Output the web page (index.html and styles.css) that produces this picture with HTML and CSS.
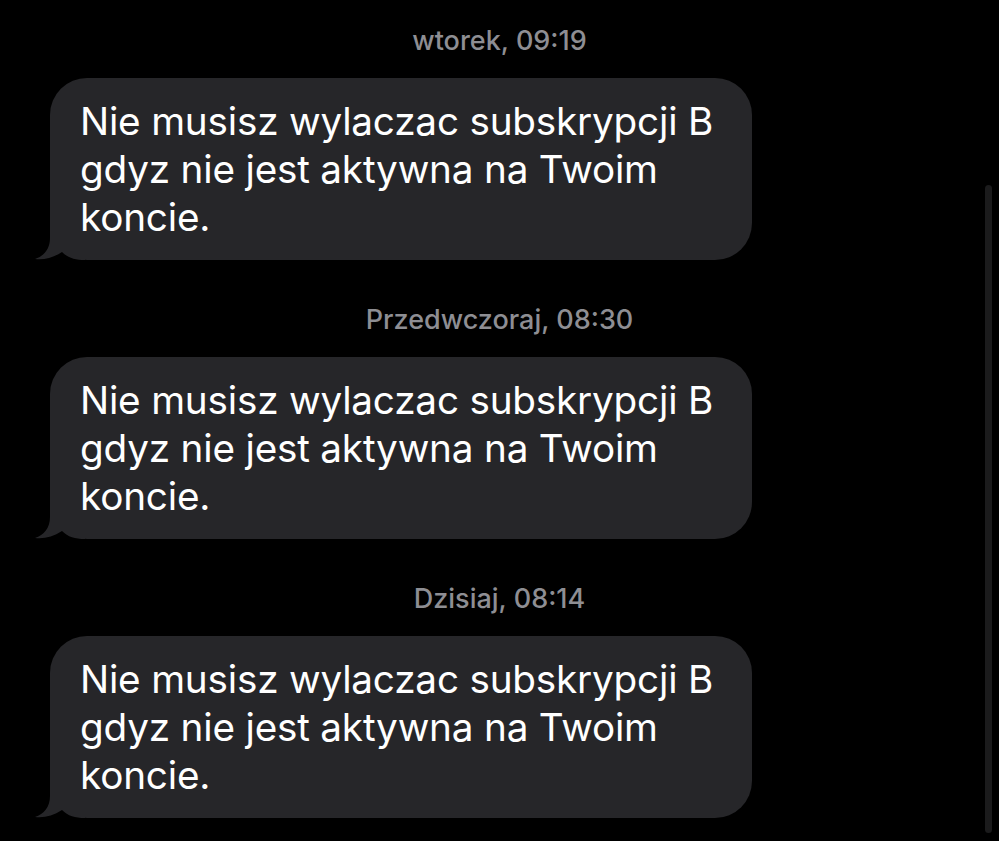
FILE: index.html
```html
<!DOCTYPE html>
<html lang="pl">
<head>
<meta charset="utf-8">
<title>Wiadomości</title>
<link rel="stylesheet" href="styles.css">
</head>
<body>
<main class="thread">
  <div class="stamp">wtorek, 09:19</div>
  <div class="bubble">
    <svg class="tail" viewBox="0 0 50 50" aria-hidden="true"><path d="M15,0 L15,28 C15,39 9,46 0,49 C9,50 18,48 27,42 C33,48 40,50 50,50 L50,0 Z"/></svg>
    <p class="msg">Nie musisz wylaczac subskrypcji B gdyz nie jest aktywna na Twoim koncie.</p>
  </div>
  <div class="stamp">Przedwczoraj, 08:30</div>
  <div class="bubble">
    <svg class="tail" viewBox="0 0 50 50" aria-hidden="true"><path d="M15,0 L15,28 C15,39 9,46 0,49 C9,50 18,48 27,42 C33,48 40,50 50,50 L50,0 Z"/></svg>
    <p class="msg">Nie musisz wylaczac subskrypcji B gdyz nie jest aktywna na Twoim koncie.</p>
  </div>
  <div class="stamp">Dzisiaj, 08:14</div>
  <div class="bubble">
    <svg class="tail" viewBox="0 0 50 50" aria-hidden="true"><path d="M15,0 L15,28 C15,39 9,46 0,49 C9,50 18,48 27,42 C33,48 40,50 50,50 L50,0 Z"/></svg>
    <p class="msg">Nie musisz wylaczac subskrypcji B gdyz nie jest aktywna na Twoim koncie.</p>
  </div>
  <div class="scrollbar"></div>
</main>
</body>
</html>
```

FILE: styles.css
```css
html, body {
  margin: 0;
  padding: 0;
  background: #000;
}
body {
  width: 999px;
  height: 841px;
  overflow: hidden;
  font-family: Inter, "Liberation Sans", sans-serif;
}
.thread {
  position: relative;
  height: 841px;
  padding-top: 24px;
  box-sizing: border-box;
  display: flex;
  flex-direction: column;
}
.stamp {
  flex-shrink: 0;
  text-align: center;
  color: #8e8e93;
  font-size: 27px;
  font-weight: 500;
  line-height: 34px;
  height: 34px;
  margin-bottom: 20px;
}
.bubble {
  flex-shrink: 0;
  position: relative;
  margin-left: 50px;
  width: 702px;
  height: 182px;
  box-sizing: border-box;
  padding: 19px 30px 0 30px;
  background: #262629;
  border-radius: 37px;
  margin-bottom: 43px;
}
.msg {
  position: relative;
  margin: 0;
  color: #fff;
  font-size: 38.7px;
  line-height: 48px;
  letter-spacing: -0.2px;
  width: 650px;
}
.tail {
  position: absolute;
  left: -15px;
  bottom: 0;
  width: 50px;
  height: 50px;
  fill: #262629;
}
.scrollbar {
  position: absolute;
  left: 985px;
  top: 185px;
  width: 7px;
  height: 648px;
  border-radius: 4px;
  background: #1b1b1c;
}
```
